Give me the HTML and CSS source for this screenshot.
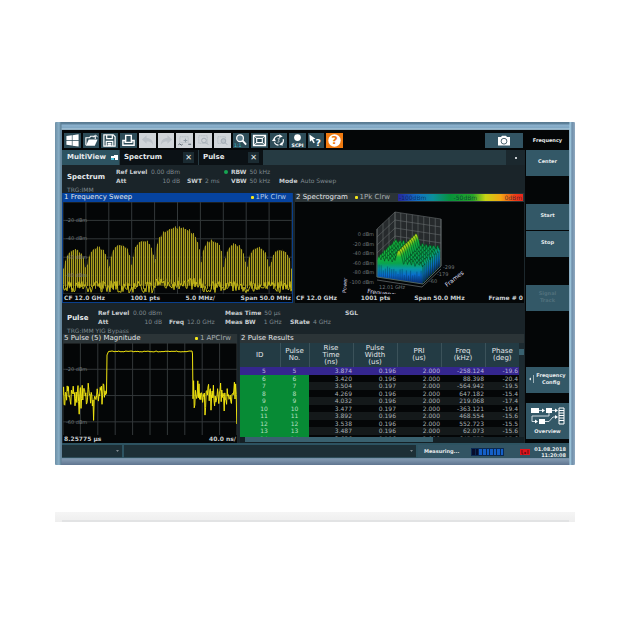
FILE: index.html
```html
<!DOCTYPE html>
<html lang="en">
<head>
<meta charset="UTF-8">
<title>Signal analyzer - MultiView</title>
<link rel="stylesheet" href="styles.css">
</head>
<body>
<div class="monitor">
 <div class="screen">
  <div class="work">
   <div class="main">
    <div class="toolbar">
     <div class="tools">
      <button class="tool" aria-label="Windows"><svg viewBox="0 0 16 16"><path d="M1.5 3.2 7.3 2.4V7.5H1.5zM8 2.3 14.5 1.4V7.5H8zM1.5 8.2H7.3V13.4L1.5 12.6zM8 8.2H14.5V14.4L8 13.5z" fill="#fff"/></svg></button>
      <button class="tool" aria-label="Open"><svg viewBox="0 0 16 16"><path d="M2 13V5H6L7 3.5H12V6.5" fill="none" stroke="#fff" stroke-width="1.2"/><path d="M2 13.5 5 7H14.5L11.5 13.5z" fill="#fff"/><path d="M9.5 4.5 12.5 2.2 14.5 4.5" fill="none" stroke="#fff"/></svg></button>
      <button class="tool" aria-label="Save"><svg viewBox="0 0 16 16"><path d="M2 2H12L14 4V14H2zM5 2V6H11V2M4.5 14V9H11.5V14M6 11H10M6 12.7H10" fill="none" stroke="#fff" stroke-width="1.3"/></svg></button>
      <button class="tool" aria-label="Print"><svg viewBox="0 0 16 16"><path d="M5 9V2.5H11V9M2 8V13H14V8H11.5V10H4.5V8z" fill="none" stroke="#fff" stroke-width="1.5"/></svg></button>
      <button class="tool off" aria-label="Undo" disabled><svg viewBox="0 0 16 16"><path d="M2 7 7 2.5V5.2C11 5.2 14 7.5 14 12.5 12 9.5 10 9 7 9V11.5z" fill="#bcc2c8"/></svg></button>
      <button class="tool off" aria-label="Redo" disabled><svg viewBox="0 0 16 16"><path d="M14 7 9 2.5V5.2C5 5.2 2 7.5 2 12.5 4 9.5 6 9 9 9V11.5z" fill="#bcc2c8"/></svg></button>
      <button class="tool off" aria-label="Zoom trace" disabled><svg viewBox="0 0 16 16"><path d="M3 4H12V10H3z" fill="none" stroke="#aab3ba" stroke-dasharray="1 1"/><path d="M9 6V10M7 8H11" stroke="#8b969f"/><path d="M1.5 12.5 3 11.5 4.5 13 6 12M12 12H15" fill="none" stroke="#56636d"/></svg></button>
      <button class="tool off" aria-label="Multi zoom" disabled><svg viewBox="0 0 16 16"><path d="M3 3H12V11H3z" fill="none" stroke="#aab3ba" stroke-dasharray="1 1"/><circle cx="8.5" cy="8" r="2.5" fill="none" stroke="#a2abb3"/><path d="M10.5 10 13 12.5" stroke="#a2abb3"/></svg></button>
      <button class="tool off" aria-label="Zoom area" disabled><svg viewBox="0 0 16 16"><path d="M3 4H11V11H3z" fill="none" stroke="#aab3ba" stroke-dasharray="1 1"/><circle cx="9" cy="8.5" r="2.5" fill="#bcc3c9" stroke="#9fa8b0"/><path d="M11 10.5 13 12.5" stroke="#9fa8b0"/></svg></button>
      <button class="tool" aria-label="Zoom off"><svg viewBox="0 0 16 16"><circle cx="7.5" cy="5.5" r="3.6" fill="#5f7f8e" stroke="#fff" stroke-width="1.3"/><path d="M10.2 8.2 14 12.5" stroke="#fff" stroke-width="2"/><text x="1" y="14.5" class="ico-11">1:1</text></svg></button>
      <button class="tool" aria-label="Full screen"><svg viewBox="0 0 16 16"><path d="M1.7 2.7H14.3V13.3H1.7z" fill="none" stroke="#fff" stroke-width="1.6"/><path d="M5 5.7H11V10.3H5z" fill="none" stroke="#fff" stroke-width="1.2"/><path d="M2 3 5 5.7M14 3 11 5.7M2 13 5 10.3M14 13 11 10.3" stroke="#fff"/></svg></button>
      <button class="tool" aria-label="Restart"><svg viewBox="0 0 16 16"><path d="M3.2 7A5 5 0 0 1 10 3.2M13 6.5A5 5 0 0 1 11 12M8 13A5 5 0 0 1 3.5 10" fill="none" stroke="#fff" stroke-width="1.3"/><path d="M9 1.2 12.5 3.8 8.8 5.4zM12.8 13.2 8.8 12.8 11.2 9.8zM1 8.5 3.4 5 5.2 8.8z" fill="#fff"/><path d="M7 6H9L8 7.8Q9.6 8.4 8 9.8H6.8" fill="none" stroke="#fff" stroke-width=".7"/></svg></button>
      <button class="tool" aria-label="SCPI recorder"><svg viewBox="0 0 16 16"><circle cx="8" cy="4.8" r="3.6" fill="#fff"/><text x="8" y="14.5" class="ico-scpi">SCPI</text></svg></button>
      <button class="tool" aria-label="Context help"><svg viewBox="0 0 16 16"><path d="M1.5 1.5 8 6 5.3 6.8 7.3 10 5.8 11 4 7.6 2 9.4z" fill="#fff"/><text x="8" y="14" class="ico-help">?</text></svg></button>
      <button class="tool help" aria-label="Help"><svg viewBox="0 0 16 16"><circle cx="8" cy="8" r="6.6" fill="#fff"/><text x="8" y="12.2" class="ico-q">?</text></svg></button>
     </div>
     <button class="camera" aria-label="Screenshot"><svg viewBox="0 0 14 11"><path d="M1 2H4L5 .7H9L10 2H13V10.5H1z" fill="#fff"/><circle cx="7" cy="6.2" r="2.9" fill="#fff" stroke="#4b6470" stroke-width="1"/></svg></button>
    </div>

    <div class="tabs">
     <button class="tab active">MultiView <svg class="mv" viewBox="0 0 7 6"><path d="M0 1H3V3H0zM3 0H7V3H3z" fill="#fff"/><path d="M0 3H3V5H0z" fill="#4bc4df"/><path d="M4 3H7V5H4z" fill="#fff"/></svg></button>
     <div class="tab wide"><a href="#spectrum">Spectrum</a><button class="close" aria-label="Close Spectrum">✕</button></div>
     <div class="tab"><a href="#pulse">Pulse</a><button class="close" aria-label="Close Pulse">✕</button></div>
     <button class="more" aria-label="More tabs"></button>
    </div>

    <div class="info" id="spectrum">
     <h2 class="name">Spectrum</h2>
     <div class="params spec">
      <div class="p fill"><b>Ref Level</b> 0.00 dBm</div><div></div><div class="p dot"><b>RBW</b> 50 kHz</div><div></div>
      <div class="p fill"><b>Att</b> 10 dB</div><div class="p"><b>SWT</b> 2 ms</div><div class="p"><b>VBW</b> 50 kHz</div><div class="p"><b>Mode</b> Auto Sweep</div>
     </div>
     <div class="trg">TRG:IMM</div>
    </div>

    <div class="windows top">
     <div class="window selected">
      <div class="title"><span>1 Frequency Sweep</span><span class="trace">1Pk Clrw</span></div>
      <svg class="plot" id="sweep" viewBox="0 0 229 92"></svg>
      <div class="foot"><span>CF 12.0 GHz</span><span>1001 pts</span><span>5.0 MHz/</span><span>Span 50.0 MHz</span></div>
     </div>
     <div class="window">
      <div class="title"><span>2 Spectrogram</span><span class="trace">1Pk Clrw</span><span class="scale"><i>-100dBm</i><i>-50dBm</i><i>0dBm</i></span></div>
      <svg class="plot" id="waterfall" viewBox="0 0 229 92">
       <defs><linearGradient id="heat" gradientUnits="userSpaceOnUse" x1="0" y1="45" x2="0" y2="81">
        <stop offset="0" stop-color="#dfe012"/><stop offset=".17" stop-color="#9ccc18"/><stop offset=".28" stop-color="#17b53a"/><stop offset=".45" stop-color="#0aa44c"/><stop offset=".6" stop-color="#0898a0"/><stop offset=".78" stop-color="#0a6cd0"/><stop offset="1" stop-color="#0c2c78"/>
       </linearGradient></defs>
      </svg>
      <div class="foot"><span>CF 12.0 GHz</span><span>1001 pts</span><span>Span 50.0 MHz</span><span>Frame # 0</span></div>
     </div>
    </div>

    <div class="info lower" id="pulse">
     <h2 class="name">Pulse</h2>
     <div class="params pul">
      <div class="p fill"><b>Ref Level</b> 0.00 dBm</div><div></div><div class="p"><b>Meas Time</b> 50 µs</div><div></div><div class="p"><b>SGL</b></div>
      <div class="p fill"><b>Att</b> 10 dB</div><div class="p"><b>Freq</b> 12.0 GHz</div><div class="p gap"><b>Meas BW</b> 1 GHz</div><div class="p"><b>SRate</b> 4 GHz</div><div></div>
     </div>
     <div class="trg">TRG:IMM YIG Bypass</div>
    </div>

    <div class="windows bottom">
     <div class="window">
      <div class="title"><span>5 Pulse (5) Magnitude</span><span class="trace">1 APClrw</span></div>
      <svg class="plot" id="magnitude" viewBox="0 0 174 92"></svg>
      <div class="foot"><span>8.25775 µs</span><span>40.0 ns/</span></div>
     </div>
     <div class="window">
      <div class="title"><span>2 Pulse Results</span></div>
      <div class="results">
       <div class="rows">
        <table>
         <colgroup><col class="c-id"><col class="c-no"><col class="c-val"><col class="c-val"><col class="c-val"><col class="c-val"><col></colgroup>
         <thead><tr><th>ID</th><th>Pulse<br>No.</th><th>Rise<br>Time<br>(ns)</th><th>Pulse<br>Width<br>(us)</th><th>PRI<br>(us)</th><th>Freq<br>(kHz)</th><th>Phase<br>(deg)</th></tr></thead>
         <tbody>
          <tr class="current"><td>5</td><td>5</td><td>3.874</td><td>0.196</td><td>2.000</td><td>-258.124</td><td>-19.6</td></tr>
          <tr><td>6</td><td>6</td><td>3.420</td><td>0.196</td><td>2.000</td><td>88.398</td><td>-20.4</td></tr>
          <tr><td>7</td><td>7</td><td>3.504</td><td>0.197</td><td>2.000</td><td>-564.942</td><td>-19.5</td></tr>
          <tr><td>8</td><td>8</td><td>4.269</td><td>0.196</td><td>2.000</td><td>647.182</td><td>-15.4</td></tr>
          <tr><td>9</td><td>9</td><td>4.032</td><td>0.196</td><td>2.000</td><td>219.068</td><td>-17.4</td></tr>
          <tr><td>10</td><td>10</td><td>3.477</td><td>0.197</td><td>2.000</td><td>-363.121</td><td>-19.4</td></tr>
          <tr><td>11</td><td>11</td><td>3.892</td><td>0.196</td><td>2.000</td><td>468.554</td><td>-15.6</td></tr>
          <tr><td>12</td><td>12</td><td>3.538</td><td>0.196</td><td>2.000</td><td>552.723</td><td>-15.5</td></tr>
          <tr><td>13</td><td>13</td><td>3.487</td><td>0.196</td><td>2.000</td><td>62.073</td><td>-15.6</td></tr>
          <tr><td>14</td><td>14</td><td>3.686</td><td>0.196</td><td>2.000</td><td>645.777</td><td>-15.6</td></tr>
         </tbody>
        </table>
       </div>
       <div class="vbar"><span class="thumb"></span></div>
       <div class="hbar"><span class="thumb"></span></div>
      </div>
     </div>
    </div>
   </div>

   <div class="softkeys">
    <div class="menu">Frequency</div>
    <button class="key">Center</button>
    <button class="key start">Start</button>
    <button class="key">Stop</button>
    <button class="key track" disabled>Signal<br>Track</button>
    <button class="key config"><svg viewBox="0 0 5 8"><path d="M0 4 2 2.5V5.5zM4 0H4.6V8H4z" fill="#e8eef0"/></svg><span>Frequency<br>Config</span></button>
    <button class="key overview">
     <svg viewBox="0 0 34 18"><path d="M0 1H8V6H0zM15 1H21V6H15zM8 12H14V17H8z" fill="#fff"/><path d="M28 1H33V17H28zM28 3.5H33M28 6H33M28 8.5H33M28 11H33M28 13.5H33" fill="none" stroke="#fff"/><path d="M8 3.5H13M21 3.5H26M18 6V9H1V14.5H5M14 14.5H18L22 10H25" fill="none" stroke="#dfe8ec" stroke-width=".9"/><path d="M11 1.5 14 3.5 11 5.5zM24 1.5 27 3.5 24 5.5zM4 12.5 7 14.5 4 16.5zM24 8 27 10 24 12z" fill="#fff"/></svg>
     Overview</button>
   </div>
  </div>

  <div class="status">
   <button class="drop first" aria-label="Channel status"></button>
   <button class="drop" aria-label="Messages"></button>
   <div class="measuring">
    <span>Measuring...</span>
    <span class="progress"><i></i><i></i><i></i><i></i><i></i><i></i><i></i><i></i><i></i></span>
    <svg class="lxi" viewBox="0 0 10 6"><path d="M0 0H10V6H0z" fill="#e0141c"/><path d="M2 1V5H3.5M4.5 3 6 5M6 3 4.5 5M8 1V5" fill="none" stroke="#4a0b10" stroke-width=".8"/></svg>
    <span class="clock">01.08.2018<br>11:20:08</span>
   </div>
  </div>
 </div>
</div>
<div class="reflection"><div class="glass"></div></div>
<script src="plots.js"></script>
</body>
</html>
```
FILE: styles.css
```css
* {
 box-sizing: border-box;
}
body {
 margin: 0;
 background: #fff;
 font-family: "DejaVu Sans", Verdana, sans-serif;
 font-size: 6px;
 line-height: 9px;
 color: #c8cdd0;
}
button {
 font: inherit;
 color: inherit;
 border: 0;
 margin: 0;
 padding: 0;
 background: none;
}
a {
 color: inherit;
 text-decoration: none;
}
svg {
 display: block;
}
.monitor {
 margin: 122px 45px 0 55px;
 padding: 8px 6px 7px 7px;
 border-radius: 1px;
 background: linear-gradient(90deg, #6d8fa6, #88aec6 4px, #5d7f94 6px, transparent 7px),
  linear-gradient(270deg, #8fa8bf, #6f8fab 3px, #a9d3e8 5px, transparent 6px),
  linear-gradient(#58788f, #5f849d 2px, #8cb1cd 3px, #7fa6c2 6px, #b3d0e0 7px, #6d8aa0 8px, #6d8aa0 calc(100% - 7px), #8299b0 calc(100% - 6px), #5f7590 100%);
}
.screen {
 background: #040607;
}
.work {
 display: grid;
 grid-template-columns: 1fr 44px;
}
.main {
 min-width: 0;
 background: #1a2429;
}

/* toolbar */
.toolbar {
 display: flex;
 justify-content: space-between;
 height: 20px;
 padding: 3px 2px 2px;
 background: #040607;
}
.tools {
 display: flex;
 gap: 2px;
 width: 279px;
}
.tool {
 flex: 1;
 height: 15px;
 background: #2d4c58;
}
.tool svg {
 height: 15px;
 margin: 0 auto;
}
.tool.off {
 background: #d0d4d8;
}
.tool.help {
 background: #f07a10;
}
.ico-11 {
 font-size: 5px;
 fill: #3fc0cf;
}
.ico-scpi {
 font-size: 5px;
 font-weight: bold;
 text-anchor: middle;
 fill: #fff;
}
.ico-help {
 font-size: 10px;
 font-weight: bold;
 fill: #fff;
}
.ico-q {
 font-size: 12px;
 font-weight: bold;
 text-anchor: middle;
 fill: #f07a10;
}
.camera {
 width: 38px;
 height: 15px;
 background: #325463;
}
.camera svg {
 width: 14px;
 margin: 0 auto;
}

/* tabs */
.tabs {
 display: flex;
 gap: 1px;
 height: 15px;
 background: #263b43;
 font-size: 7px;
 font-weight: bold;
 color: #e6eaec;
}
.tab {
 display: flex;
 align-items: center;
 justify-content: space-between;
 width: 64px;
 padding: 0 4px;
 background: #0b1115;
}
.tab.active {
 width: 57px;
 padding: 0 1px 0 5px;
 background: #2d5361;
 font-weight: bold;
}
.tab.wide {
 width: 78px;
}
.mv {
 width: 7px;
}
.close {
 width: 11px;
 height: 11px;
 background: #1b2b32;
 font-size: 8px;
 line-height: 11px;
}
.more {
 width: 19px;
 margin-left: auto;
 background: #1b282e;
}
.more::after {
 content: "";
 display: block;
 width: 2px;
 height: 2px;
 margin: 0 auto;
 background: #c8cdd0;
}

/* channel info */
.info {
 display: grid;
 grid-template-columns: 49px 1fr;
 height: 28px;
 padding: 2px 5px 0;
 color: #7f898e;
}
.info.lower {
 grid-template-columns: 31px 1fr;
 height: 31px;
 padding-top: 5px;
}
.name {
 margin: 0;
 font-size: 7px;
 line-height: 20px;
 color: #e6eaec;
}
.params {
 display: grid;
 grid-auto-rows: 9px;
}
.params.spec {
 grid-template-columns: 71px 44px 48px 1fr;
}
.params.pul {
 grid-template-columns: 71px 56px 65px 55px 1fr;
}
.p {
 display: flex;
 gap: 3px;
 position: relative;
 white-space: nowrap;
}
.p b {
 color: #c8cdd0;
}
.p.fill {
 width: 64px;
 justify-content: space-between;
}
.p.gap {
 gap: 8px;
}
.dot::before {
 content: "";
 position: absolute;
 left: -7px;
 top: 3px;
 width: 4px;
 height: 4px;
 border-radius: 2px;
 background: #16a552;
}
.trg {
 grid-column: 1 / 3;
 line-height: 6px;
}

/* measurement windows */
.windows {
 display: grid;
 gap: 1px;
}
.windows.top {
 grid-template-columns: 231fr 231fr;
 height: 110px;
}
.windows.bottom {
 grid-template-columns: 176fr 286fr;
 height: 109px;
}
.window {
 min-width: 0;
 overflow: hidden;
 background: #040607;
 border: 0 solid #1c272c;
 border-width: 0 1px;
}
.window.selected {
 border-color: #0a3f8c;
 border-bottom: 1px solid #0a3f8c;
}
.title {
 display: flex;
 gap: 3px;
 height: 9px;
 padding: 0 1px;
 background: #2b3437;
 font-size: 7px;
 white-space: nowrap;
 color: #e2e6e8;
}
.selected .title {
 background: #06439f;
}
.trace {
 display: flex;
 align-items: center;
 gap: 2px;
 margin-left: auto;
 padding-right: 5px;
 color: #a9b0b3;
}
.selected .trace {
 color: #b5c8e8;
}
.trace::before {
 content: "";
 width: 3px;
 height: 3px;
 border-radius: 1px;
 background: #f6e81a;
}
.scale {
 flex: 0 0 125px;
 display: flex;
 justify-content: space-between;
 height: 7px;
 margin-top: 1px;
 padding: 0 1px;
 background: linear-gradient(90deg, #26269c, #1272c4 16%, #0c8f9c 28%, #07933a 42%, #28a529 60%, #c8d414 70%, #f3a714 82%, #ee3b18 94%, #e8261c);
 font-size: 6px;
 line-height: 7px;
 color: rgba(0, 20, 50, .65);
}
.scale i {
 font-style: normal;
}
.plot {
 width: 100%;
}
.grid {
 fill: none;
 stroke: #33383a;
 stroke-width: 1;
}
.axis {
 font-size: 5px;
 fill: #70767a;
}
.foot {
 display: flex;
 justify-content: space-between;
 padding: 0 1px;
 font-size: 6px;
 line-height: 8px;
 font-weight: bold;
 color: #c8cdd0;
}

/* pulse table */
.results {
 display: grid;
 grid-template-columns: 1fr 5px;
 grid-template-rows: 94px 6px;
}
.rows {
 min-width: 0;
 overflow: hidden;
}
table {
 width: 100%;
 height: 99px;
 table-layout: fixed;
 border-collapse: collapse;
}
.c-id {
 width: 40px;
}
.c-no {
 width: 29px;
}
.c-val {
 width: 44px;
}
th {
 height: 24px;
 padding: 0;
 background: #233b44;
 border-right: 1px solid #3b525a;
 font-size: 7px;
 line-height: 7px;
 font-weight: normal;
 color: #e2e6e8;
}
th:last-child {
 border-right: 0;
}
td {
 padding: 0 1px 0 0;
 font-size: 6px;
 line-height: 7px;
 text-align: right;
 color: #a9b0b3;
}
tbody tr:nth-child(odd) {
 background: #14191a;
}
td:nth-child(-n+2) {
 padding: 0;
 text-align: center;
 color: #b5dfc0;
 background: #078b35;
}
td:first-child {
 padding-left: 8px;
}
tbody tr.current, tbody tr.current td {
 background: #34268e;
 color: #b9b4dc;
}
.vbar {
 padding: 6px 0;
 background: #1c2a30;
}
.vbar .thumb {
 display: block;
 height: 6px;
 background: #39616f;
}
.hbar {
 grid-column: 1 / 3;
 padding: 0 6px 0 5px;
 background: #142025;
}
.hbar .thumb {
 display: block;
 width: 69%;
 height: 5px;
 background: #39616f;
}

/* softkeys */
.softkeys {
 display: flex;
 flex-direction: column;
 gap: 1px;
 padding-left: 1px;
 font-size: 5px;
 font-weight: bold;
 line-height: 7px;
 text-align: center;
 color: #e6eaec;
}
.menu {
 height: 19px;
 line-height: 20px;
}
.key {
 height: 26px;
 padding-bottom: 3px;
 background: #335867;
}
.key.start {
 margin-top: 27px;
}
.key.track {
 margin-top: 27px;
 color: #51707c;
}
.key.config {
 display: flex;
 align-items: center;
 justify-content: center;
 gap: 2px;
 margin-top: 55px;
}
.config svg {
 width: 5px;
}
.key.overview {
 height: 36px;
 margin-top: 9px;
 padding: 0;
}
.overview svg {
 width: 34px;
 margin: 0 auto 3px;
}

/* status bar */
.status {
 display: flex;
 gap: 2px;
 height: 15px;
 border-top: 2px solid #2d5361;
 background: #2d5361;
}
.drop {
 flex: 1;
 padding-right: 3px;
 background: #1d2f36;
 border-bottom: 1px solid #2d4c58;
}
.drop.first {
 flex: 0 0 60px;
}
.drop::after {
 content: "";
 display: block;
 width: 3px;
 height: 2px;
 margin-left: auto;
 background: #7f898e;
 clip-path: polygon(0 0, 100% 0, 50% 100%);
}
.measuring {
 display: flex;
 align-items: center;
 width: 151px;
 padding: 0 3px 0 6px;
 background: #325463;
 font-size: 5px;
 font-weight: bold;
 color: #e6eaec;
}
.progress {
 display: flex;
 gap: 1px;
 width: 33px;
 height: 8px;
 margin-left: 12px;
 padding: 1px;
 background: #0b2a52;
}
.progress i {
 flex: 1;
 background: #1560c8;
}
.progress i:nth-child(-n+2) {
 background: #060c2c;
}
.lxi {
 width: 10px;
 margin-left: auto;
}
.clock {
 width: 36px;
 line-height: 6px;
 text-align: right;
}

/* mirror image of the case under the device */
.reflection {
 height: 10px;
 margin: 47px 45px 0 55px;
 padding: 8px 6px 0 7px;
 background: linear-gradient(#f5f5f5, #eee);
}
.glass {
 height: 2px;
 background: #e2e3e4;
}
```
FILE: plots.js
```js
var NS = 'http://www.w3.org/2000/svg';

function add(svg, name, attrs, text) {
  var el = document.createElementNS(NS, name);
  for (var k in attrs) el.setAttribute(k, attrs[k]);
  if (text) el.textContent = text;
  svg.appendChild(el);
  return el;
}

// repeatable noise
var seed = 7;
function rnd() {
  seed = (seed * 16807) % 2147483647;
  return seed / 2147483647;
}

function grid(svg, w, h, nx, ny) {
  var d = '';
  for (var i = 0; i <= nx; i++) d += 'M' + (i * w / nx) + ' 0V' + h;
  for (var j = 0; j <= ny; j++) d += 'M0 ' + (j * h / ny) + 'H' + w;
  add(svg, 'path', { d: d, 'class': 'grid' });
}

// 1 Frequency Sweep
function sweep() {
  var svg = document.getElementById('sweep');
  grid(svg, 229, 92, 10, 5);
  var peaks = [24, 37, 41, 44, 46];
  var fill = 'M0 92', lines = '', dark = '', noise = 'M0 84';
  for (var x = 0; x <= 229; x += 1) {
    var t = Math.abs(x - 114.5) / 22.9;
    var n = Math.min(4, Math.floor(t));
    var s = n === 0 ? Math.cos(t * Math.PI / 2) : Math.sin((t - n) * Math.PI);
    var top = peaks[n] - 9 * Math.log(Math.max(s, 0.02));
    if (top > 64) top = 64;
    var base = 82 + rnd() * 6 - (n === 0 ? 4 : 0);
    fill += 'L' + x + ' ' + (top + 2);
    if (x % 2 === 0) lines += 'M' + (x + .5) + ' ' + (top + rnd() * 3) + 'V' + base;
    if (x % 4 === 3) dark += 'M' + (x + .5) + ' ' + (top + 1) + 'V' + (base - 4);
    noise += 'L' + x + ' ' + (79 + rnd() * 12 - (n === 0 ? 3 : 0));
  }
  add(svg, 'path', { d: fill + 'V84H0z', fill: '#5c5714', 'fill-opacity': .75 });
  add(svg, 'path', { d: dark, stroke: '#1c1a08', 'stroke-width': .9 });
  add(svg, 'path', { d: lines, stroke: '#b5aa20', 'stroke-width': .9 });
  add(svg, 'path', { d: noise, fill: 'none', stroke: '#d0c41a', 'stroke-width': .9 });
  ['-20 dBm', '-40 dBm', '-60 dBm', '-80 dBm'].forEach(function (s, i) {
    add(svg, 'text', { x: 3, y: 20 + i * 18.4, 'class': 'axis' }, s);
  });
}

// 5 Pulse Magnitude
function magnitude() {
  var svg = document.getElementById('magnitude');
  grid(svg, 174, 92, 10, 3.5);
  var d = 'M0 52', x;
  function noisy(from, to) {
    for (x = from; x <= to; x += .6) {
      var v = 52 + (rnd() + rnd() - 1) * 15;
      if (rnd() > .95) v += 8 + rnd() * 16;
      d += 'L' + x.toFixed(1) + ' ' + v.toFixed(1);
    }
  }
  noisy(0, 43);
  d += 'L43.5 50L44 12L45.5 8.5';
  for (x = 46; x <= 129; x += 1) d += 'L' + x + ' ' + (8 + rnd()).toFixed(1);
  d += 'L129.5 11L130 54';
  noisy(130, 174);
  add(svg, 'path', { d: d, fill: 'none', stroke: '#f0e410', 'stroke-width': 1 });
  add(svg, 'text', { x: 3, y: 28, 'class': 'axis' }, '-20 dBm');
  add(svg, 'text', { x: 3, y: 81, 'class': 'axis' }, '-60 dBm');
}

// 2 Spectrogram, drawn from the oldest frame (back) to the newest
function waterfall() {
  var svg = document.getElementById('waterfall');
  var i, d = '';
  add(svg, 'path', { d: 'M82 27L100 10V57L82 75zM100 10L146 17V64L100 57z', fill: '#262a2c' });
  for (i = 0; i <= 6; i++) d += 'M82 ' + (27 + i * 8) + 'L100 ' + (10 + i * 8) + 'L146 ' + (17 + i * 8);
  for (i = 0; i <= 8; i++) d += 'M' + (100 + i * 5.75) + ' ' + (10 + i * .9) + 'V' + (57 + i * .9);
  for (i = 0; i <= 3; i++) d += 'M' + (82 + i * 6) + ' ' + (27 - i * 5.7) + 'V' + (75 - i * 5.7);
  add(svg, 'path', { d: d, fill: 'none', stroke: '#666b6d', 'stroke-width': .6 });
  for (var f = 9; f >= 0; f--) {
    // every frame is drawn at the front plane and pushed back
    var p = 'M82 75';
    for (var u = 0; u <= 46; u += .5) {
      var t = Math.abs(u - 22) / 4;
      var h = 16 + 4 * Math.abs(Math.sin(u * Math.PI / 3.8)) + rnd() * 2;
      if (t < 1) h = 19 + 11 * Math.cos(t * Math.PI / 2);
      p += 'L' + (82 + u) + ' ' + (75 + u * .15 - h).toFixed(1);
    }
    p += 'V82z';
    add(svg, 'path', { d: p, fill: 'url(#heat)', stroke: '#06401c', 'stroke-width': .6,
      transform: 'translate(' + f * 1.9 + ' ' + f * -1.85 + ')' });
  }
  d = '';
  for (i = 0; i < 46; i += 2.1) d += 'M' + (82 + i) + ' ' + (62 + i * .15 + rnd() * 8) + 'V' + (74 + i * .15);
  add(svg, 'path', { d: d, stroke: '#043c60', 'stroke-width': .6, 'stroke-opacity': .8 });
  add(svg, 'path', { d: 'M82 27V75L128 82L146 64V17M82 78L127 85L146 67', fill: 'none', stroke: '#70777a', 'stroke-width': .7 });
  ['0 dBm', '-20 dBm', '-40 dBm', '-60 dBm', '-80 dBm', '-100 dBm'].forEach(function (s, n) {
    add(svg, 'text', { x: 79, y: 34 + n * 9.5, 'class': 'axis', 'text-anchor': 'end' }, s);
  });
  add(svg, 'text', { x: 84, y: 87, 'class': 'axis' }, '12.01 GHz');
  add(svg, 'text', { x: 148, y: 67, 'class': 'axis' }, '-299');
  add(svg, 'text', { x: 142, y: 74, 'class': 'axis' }, '-179');
  add(svg, 'text', { x: 134, y: 81, 'class': 'axis' }, '-60');
  add(svg, 'text', { transform: 'translate(152 85) rotate(-38)', 'font-size': 6, fill: '#dde' }, 'Frames');
  add(svg, 'text', { transform: 'translate(72 91) rotate(8)', 'font-size': 6, fill: '#dde' }, 'Frequency');
  add(svg, 'text', { transform: 'translate(51 91) rotate(-86)', 'font-size': 5, fill: '#dde' }, 'Power');
}

sweep();
magnitude();
waterfall();
```
